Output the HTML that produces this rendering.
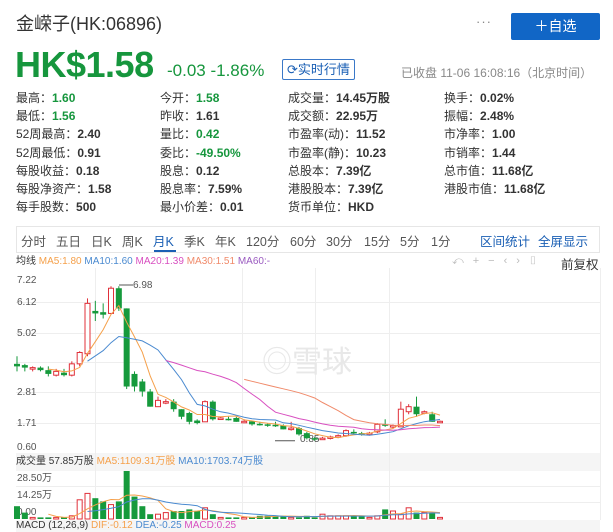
<!DOCTYPE html>
<html><head><meta charset="utf-8">
<style>
*{margin:0;padding:0;box-sizing:border-box}
body{width:613px;height:529px;overflow:hidden;background:#fff;font-family:"Liberation Sans","Noto Sans CJK SC",sans-serif;color:#333;position:relative}
.a{position:absolute;white-space:nowrap}
.g{color:#16963d}
.st{font-size:12px;line-height:18.2px}
.st b{font-weight:bold;color:#333}
.st b.g{color:#16963d}
.tab{position:absolute;top:231px;font-size:12.5px;color:#555}
</style></head><body>
<div class="a" style="left:16px;top:10px;font-size:18px;color:#333">金嵘子(HK:06896)</div>
<div class="a" style="left:476px;top:14px;font-size:13px;color:#888;letter-spacing:1px">···</div>
<div class="a" style="left:511px;top:13px;width:89px;height:27px;background:#1166c6;border-radius:2px;color:#fff;font-size:14px;text-align:center;line-height:27px">＋自选</div>
<div class="a g" style="left:15px;top:44px;font-size:36px;font-weight:bold;letter-spacing:-0.5px">HK$1.58</div>
<div class="a g" style="left:167px;top:61px;font-size:17px">-0.03 -1.86%</div>
<div class="a" style="left:282px;top:59px;width:73px;height:21px;border:1px solid #3a78c8;border-radius:2px;color:#1a5fb4;font-size:13px;line-height:19px;padding-left:4px">⟳实时行情</div>
<div class="a" style="left:401px;top:64px;font-size:12px;color:#888">已收盘 11-06 16:08:16（北京时间）</div>

<div class="a st" style="left:16px;top:89px">最高：<b class="g">1.60</b><br>最低：<b class="g">1.56</b><br>52周最高：<b>2.40</b><br>52周最低：<b>0.91</b><br>每股收益：<b>0.18</b><br>每股净资产：<b>1.58</b><br>每手股数：<b>500</b></div>
<div class="a st" style="left:160px;top:89px">今开：<b class="g">1.58</b><br>昨收：<b>1.61</b><br>量比：<b class="g">0.42</b><br>委比：<b class="g">-49.50%</b><br>股息：<b>0.12</b><br>股息率：<b>7.59%</b><br>最小价差：<b>0.01</b></div>
<div class="a st" style="left:288px;top:89px">成交量：<b>14.45万股</b><br>成交额：<b>22.95万</b><br>市盈率(动)：<b>11.52</b><br>市盈率(静)：<b>10.23</b><br>总股本：<b>7.39亿</b><br>港股股本：<b>7.39亿</b><br>货币单位：<b>HKD</b></div>
<div class="a st" style="left:444px;top:89px">换手：<b>0.02%</b><br>振幅：<b>2.48%</b><br>市净率：<b>1.00</b><br>市销率：<b>1.44</b><br>总市值：<b>11.68亿</b><br>港股市值：<b>11.68亿</b></div>

<div class="a" style="left:16px;top:226px;width:584px;height:27px;border:1px solid #e6e6e6"></div>
<div class="tab" style="left:21px">分时</div><div class="tab" style="left:56px">五日</div><div class="tab" style="left:91px">日K</div><div class="tab" style="left:122px">周K</div>
<div class="tab" style="left:153px;color:#1a5fb4">月K</div><div class="a" style="left:154px;top:250px;width:22px;height:2px;background:#1a5fb4"></div>
<div class="tab" style="left:184px">季K</div><div class="tab" style="left:215px">年K</div><div class="tab" style="left:246px">120分</div><div class="tab" style="left:290px">60分</div><div class="tab" style="left:326px">30分</div><div class="tab" style="left:364px">15分</div><div class="tab" style="left:400px">5分</div><div class="tab" style="left:431px">1分</div>
<div class="tab" style="left:480px;color:#1a5fb4">区间统计</div><div class="tab" style="left:538px;color:#1a5fb4">全屏显示</div>

<div class="a" style="left:16px;top:256px;font-size:10px;line-height:12px"><span style="color:#333">均线</span> <span style="color:#f5a04a">MA5:1.80</span> <span style="color:#4a8ad0">MA10:1.60</span> <span style="color:#d84fc0">MA20:1.39</span> <span style="color:#f08a6a">MA30:1.51</span> <span style="color:#9a5ac0">MA60:-</span></div>
<div class="a" style="left:452px;top:255px;font-size:11px;color:#bbb;letter-spacing:9px">⤺+−‹›▯</div>
<div class="a" style="left:561px;top:254px;font-size:12.5px;color:#333">前复权</div>

<div class="a" style="left:16px;top:453px;width:584px;height:18px;background:#f5f5f5"></div>
<div class="a" style="left:16px;top:456px;font-size:10px;line-height:12px"><span>成交量 57.85万股</span> <span style="color:#f5a04a">MA5:1109.31万股</span> <span style="color:#4a8ad0">MA10:1703.74万股</span></div>
<div class="a" style="left:16px;top:520px;width:584px;height:12px;background:#f5f5f5"></div>
<div class="a" style="left:16px;top:520px;font-size:10px;line-height:12px"><span>MACD (12,26,9)</span> <span style="color:#f5a04a">DIF:-0.12</span> <span style="color:#4a8ad0">DEA:-0.25</span> <span style="color:#d84fc0">MACD:0.25</span></div>

<svg id="s" class="a" style="left:0;top:0" width="613" height="529" xmlns="http://www.w3.org/2000/svg">
<g stroke="#eee" stroke-width="1">
<line x1="16" y1="302.5" x2="600" y2="302.5"/><line x1="16" y1="333.5" x2="600" y2="333.5"/><line x1="16" y1="362.5" x2="600" y2="362.5"/><line x1="16" y1="392.5" x2="600" y2="392.5"/><line x1="16" y1="423.5" x2="600" y2="423.5"/>
<line x1="95.5" y1="268" x2="95.5" y2="520"/><line x1="242.5" y1="268" x2="242.5" y2="520"/><line x1="315.5" y1="268" x2="315.5" y2="520"/><line x1="389.5" y1="268" x2="389.5" y2="520"/><line x1="600.5" y1="268" x2="600.5" y2="520"/>
<line x1="16" y1="486.5" x2="600" y2="486.5"/><line x1="16" y1="502.5" x2="600" y2="502.5"/>
</g>
<text x="262" y="372" font-size="30" fill="#e8e8e8" font-family="Liberation Sans,Noto Sans CJK SC,sans-serif">◎雪球</text>
<g font-size="10" fill="#555" font-family="Liberation Sans,sans-serif">
<text x="17" y="283">7.22</text><text x="17" y="305">6.12</text><text x="17" y="336">5.02</text><text x="17" y="395">2.81</text><text x="17" y="426">1.71</text><text x="17" y="450">0.60</text>
<text x="17" y="481">28.50万</text><text x="17" y="498">14.25万</text><text x="17" y="515">0.00</text>
<text x="133" y="288">6.98</text><text x="300" y="442">0.85</text>
</g>
<g id="c"></g>
</svg>
<script>
var d=[[3.9,3.8,4.2,3.6],[3.85,3.75,3.9,3.6],[3.7,3.75,3.8,3.6],[3.75,3.65,3.8,3.6],[3.65,3.5,3.8,3.4],[3.45,3.6,3.7,3.4],[3.55,3.45,3.7,3.4],[3.45,3.9,4.0,3.4],[3.9,4.35,4.4,3.8],[4.3,6.3,6.5,4.2],[6.0,5.9,6.4,5.6],[5.95,5.85,6.3,5.7],[5.9,6.9,6.98,5.9],[6.9,6.1,6.98,6.0],[6.1,3.0,6.1,2.9],[3.5,3.0,3.6,2.8],[3.2,2.8,3.3,2.6],[2.8,2.2,2.9,2.2],[2.2,2.45,2.6,2.2],[2.35,2.4,2.5,2.3],[2.4,2.1,2.5,2.0],[2.1,1.8,2.1,1.7],[1.95,1.6,2.0,1.5],[1.65,1.55,1.7,1.5],[1.6,2.4,2.45,1.6],[2.4,1.7,2.45,1.65],[1.72,1.75,1.8,1.7],[1.72,1.7,1.8,1.65],[1.75,1.6,1.8,1.6],[1.6,1.62,1.7,1.55],[1.62,1.5,1.65,1.45],[1.52,1.5,1.6,1.45],[1.5,1.48,1.55,1.4],[1.48,1.47,1.6,1.4],[1.45,1.3,1.5,1.3],[1.3,1.35,1.6,1.25],[1.35,1.1,1.4,1.05],[1.15,0.95,1.2,0.9],[0.95,0.92,1.0,0.85],[0.92,0.95,1.0,0.9],[0.95,1.0,1.05,0.9],[1.0,1.05,1.1,0.95],[1.05,1.25,1.3,1.0],[1.2,1.15,1.3,1.1],[1.15,1.12,1.2,1.05],[1.1,1.15,1.2,1.05],[1.2,1.5,1.55,1.15],[1.5,1.45,1.7,1.4],[1.4,1.45,1.5,1.35],[1.4,2.1,2.4,1.4],[2.0,2.2,2.3,1.9],[2.2,1.9,2.6,1.8],[1.95,2.0,2.05,1.9],[1.9,1.6,2.0,1.6],[1.6,1.62,1.65,1.58]];
var v=[8,4,1,1,1,1,1,2,12,16,13,11,9,11,30,14,8,3,3,4,5,5,6,5,7,3,1,1,1,1,1,2,2,2,2,1,1,2,1,3,2,2,2,2,2,1,2,6,5,3,7,4,4,4,1];
var Y=function(p){return 447-(p-0.6)*25.2};
var n=d.length,sp=(440-17)/(n-1),h='';
var G='#169a3c',R='#e0303a';
for(var i=0;i<n;i++){var x=17+i*sp,o=d[i][0],c=d[i][1],up=c>=o,col=up?R:G;
h+='<line x1="'+x+'" x2="'+x+'" y1="'+Y(d[i][2])+'" y2="'+Y(d[i][3])+'" stroke="'+col+'"/>';
var t=Y(Math.max(o,c)),b=Y(Math.min(o,c)),hh=Math.max(b-t,1.5);
h+=up?'<rect x="'+(x-2.5)+'" y="'+t+'" width="5" height="'+hh+'" fill="#fff" stroke="'+col+'"/>':'<rect x="'+(x-3)+'" y="'+t+'" width="6" height="'+hh+'" fill="'+col+'"/>';
var vh=v[i]*1.6;h+=up?'<rect x="'+(x-2.5)+'" y="'+(519-vh)+'" width="5" height="'+vh+'" fill="#fff" stroke="'+col+'"/>':'<rect x="'+(x-3)+'" y="'+(519-vh)+'" width="6" height="'+vh+'" fill="'+col+'"/>';}
function ma(k,col,arr,f){var p=[];for(var i=k-1;i<n;i++){var s=0;for(var j=i-k+1;j<=i;j++)s+=arr(j);p.push((17+i*sp).toFixed(1)+','+f(s/k).toFixed(1));}return '<polyline fill="none" stroke="'+col+'" stroke-width="1" points="'+p.join(' ')+'"/>';}
var cl=function(j){return d[j][1]},vl=function(j){return v[j]},VY=function(q){return 519-q*1.6};
h+=ma(5,'#f5a04a',cl,Y)+ma(10,'#4a8ad0',cl,Y)+ma(20,'#d84fc0',cl,Y)+ma(30,'#f08a6a',cl,Y);
h+=ma(5,'#f5a04a',vl,VY)+ma(10,'#4a8ad0',vl,VY);
h+='<line x1="119" x2="133" y1="285" y2="285" stroke="#555"/><line x1="275" x2="295" y1="'+Y(0.85)+'" y2="'+Y(0.85)+'" stroke="#555"/>';
document.getElementById('c').innerHTML=h;
</script>
</body></html>
